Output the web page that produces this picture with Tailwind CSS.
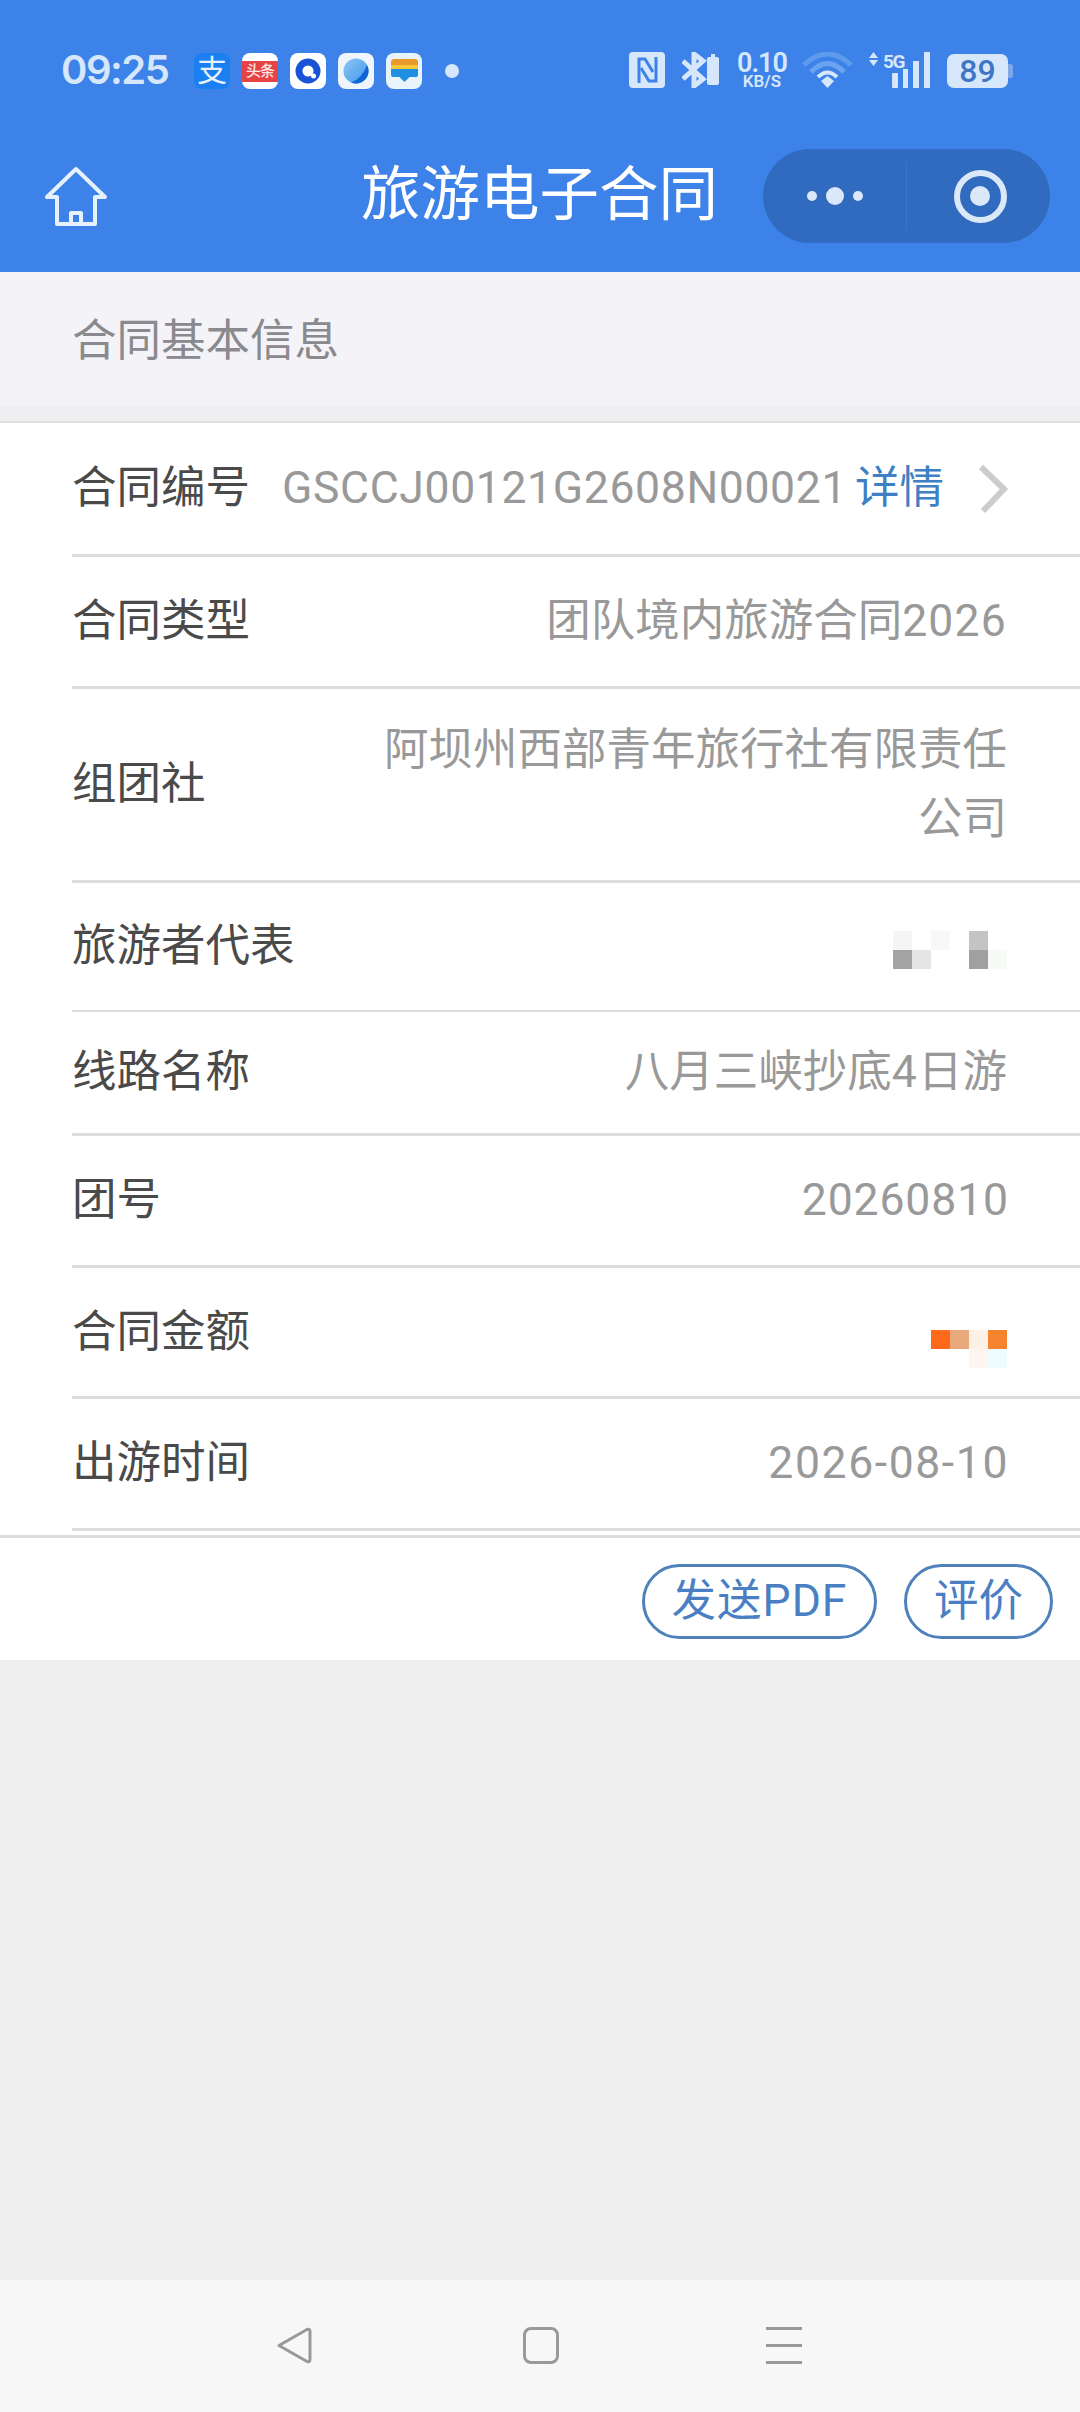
<!DOCTYPE html>
<html lang="zh">
<head>
<meta charset="utf-8">
<title>旅游电子合同</title>
<script src="https://cdn.jsdelivr.net/npm/@tailwindcss/browser@4"></script>
</head>
<body class="m-0 bg-[#eeeeee]">
<div class="w-[1080px] h-[2412px] flex flex-col overflow-hidden font-['Roboto','Noto_Sans_CJK_SC',sans-serif]">

    <!-- 顶部蓝色区域 -->
    <header class="h-[272px] shrink-0 bg-[#3d82e8] flex flex-col">
        <!-- 状态栏 -->
        <div class="h-[149px] shrink-0 flex items-start pt-[52px] pl-[61px]">
            <span class="w-[108px] h-[36px] flex items-center text-[40px] font-semibold leading-none text-[#d6e7fc] font-['Inter',sans-serif] tracking-[-1.5px]">09:25</span>
            <div class="ml-[25px] mt-px flex items-center gap-[12px]">
                <div class="w-[36px] h-[36px] rounded-[8px] bg-[#1a7ff0] flex items-center justify-center text-[30px] leading-none text-[#e6f1fd]">支</div>
                <div class="w-[36px] h-[36px] rounded-[8px] bg-white flex items-center overflow-hidden">
                    <span class="w-full h-[21px] bg-[#e64444] flex items-center justify-center text-[15px] font-medium leading-none text-[#fde8e8] whitespace-nowrap tracking-[-1px]">头条</span>
                </div>
                <div class="w-[36px] h-[36px] rounded-[8px] bg-white flex items-center justify-center">
                    <svg width="30" height="30" viewBox="0 0 30 30"><circle cx="15" cy="15" r="9" fill="none" stroke="#1a53d8" stroke-width="7"/><circle cx="20.500" cy="20" r="2.500" fill="#ffffff"/></svg>
                </div>
                <div class="w-[36px] h-[36px] rounded-[8px] bg-[#eef5fd] flex items-center justify-center">
                    <svg width="30" height="30" viewBox="0 0 30 30">
                        <defs><linearGradient id="planet" x1="0" y1="0" x2="1" y2="1"><stop offset="0" stop-color="#8cc8f6"/><stop offset="1" stop-color="#3f93ea"/></linearGradient></defs>
                        <circle cx="15" cy="15" r="12.500" fill="url(#planet)"/>
                        <path d="M26 9A12.500 12.500 0 0 1 10 26.500Q21 23 26 9Z" fill="#1266d4"/>
                    </svg>
                </div>
                <div class="w-[36px] h-[36px] rounded-[8px] bg-[#e8f3fc] flex flex-col items-center pt-[6px]">
                    <div class="w-[27px] h-[6px] rounded-t-[3px] bg-[#e99a2b]"></div>
                    <div class="w-[27px] h-[4px] bg-[#f5c53a]"></div>
                    <svg width="27" height="13" viewBox="0 0 27 13" class="block"><path d="M0 0H27V6Q27 8 24 8H18.500L13.500 13L8.500 8H3Q0 8 0 6Z" fill="#1f8fe0"/></svg>
                </div>
            </div>
            <div class="ml-[23px] mt-[12px] w-[14px] h-[14px] rounded-full bg-[#d6e7fc]"></div>

            <!-- 右侧状态图标 -->
            <svg class="ml-[170px]" width="36" height="36" viewBox="0 0 36 36">
                <rect width="36" height="36" rx="4" fill="#d6e7fc"/>
                <path d="M10 31V7H16L24 20" fill="none" stroke="#3d82e8" stroke-width="3"/>
                <path d="M27 5V29H20L12 16" fill="none" stroke="#3d82e8" stroke-width="3"/>
            </svg>
            <svg class="ml-[17px]" width="37" height="36" viewBox="0 0 37 36">
                <path d="M1 9L21 27L12 34V2L21 9L1 27" fill="none" stroke="#d6e7fc" stroke-width="5"/>
                <path d="M25 7Q25 5 27 5H29V2H33V5H35Q37 5 37 7V31Q37 33 35 33H27Q25 33 25 31Z" fill="#d6e7fc"/>
            </svg>
            <div class="ml-[17px] w-[52px] flex flex-col items-center text-[#d6e7fc] font-semibold">
                <span class="h-[22px] flex items-center text-[27px] leading-none tracking-[-1px]">0.10</span>
                <span class="h-[14px] flex items-center text-[17px] leading-none">KB/S</span>
            </div>
            <svg class="ml-[14px]" width="51" height="36" viewBox="0 0 51 36">
                <path d="M2 13Q25.500 -9 49 13" fill="none" stroke="#5e9bec" stroke-width="5"/>
                <path d="M9 20Q25.500 3 42 20" fill="none" stroke="#6aa4ef" stroke-width="5"/>
                <path d="M16 25Q25.500 16 35 25" fill="none" stroke="#d6e7fc" stroke-width="4"/>
                <path d="M19 29L25.500 24L32 29L25.500 36Z" fill="#d6e7fc"/>
            </svg>
            <div class="ml-[15px] relative w-[62px] h-[36px]">
                <svg class="absolute left-0 top-0" width="62" height="36" viewBox="0 0 62 36">
                    <path d="M1 6L5.500 0L10 6ZM1 8L5.500 14L10 8Z" fill="#d6e7fc"/>
                    <rect x="24" y="21" width="6" height="15" rx="1" fill="#d6e7fc"/>
                    <rect x="35" y="17" width="5" height="19" fill="#d6e7fc"/>
                    <rect x="45" y="9" width="6" height="27" fill="#d6e7fc"/>
                    <rect x="56" y="0" width="6" height="36" fill="#d6e7fc"/>
                </svg>
                <span class="absolute left-[15px] top-[0px] text-[19px] leading-none font-bold text-[#d6e7fc] tracking-[-1.5px]">5G</span>
            </div>
            <div class="ml-[17px] mt-[2px] flex items-center">
                <div class="w-[61px] h-[34px] rounded-[7px] bg-[#d6e7fc] flex items-center justify-center text-[32px] font-medium leading-none text-[#3e76c4]">89</div>
                <div class="w-[5px] h-[14px] rounded-r-[3px] bg-[#7ea8e8]"></div>
            </div>
        </div>

        <!-- 标题栏 -->
        <div class="flex items-start">
            <svg class="ml-[45px] mt-[17px]" width="62" height="62" viewBox="0 0 62 62">
                <path d="M31 3L2 31H12V58H50V31H60Z M26 58V47H36V58" fill="none" stroke="#e6f1fd" stroke-width="4" stroke-linejoin="round"/>
            </svg>
            <h1 class="ml-[254px] w-[357px] h-[94px] flex items-center text-[59.500px] font-normal leading-none whitespace-nowrap text-white">旅游电子合同</h1>
            <!-- 胶囊按钮 -->
            <div class="ml-[45px] w-[287px] h-[94px] rounded-full bg-[#306bbf] flex items-center">
                <div class="w-[143px] flex items-center justify-center gap-[9px]">
                    <span class="w-[10px] h-[10px] rounded-full bg-[#dbe8f8]"></span>
                    <span class="w-[18px] h-[18px] rounded-full bg-[#dbe8f8]"></span>
                    <span class="w-[10px] h-[10px] rounded-full bg-[#dbe8f8]"></span>
                </div>
                <div class="w-px h-[66px] bg-[#3c76c6]"></div>
                <div class="flex-1 flex justify-center pl-[3px]">
                    <div class="w-[53px] h-[53px] rounded-full border-[6px] border-[#dbe8f8] flex items-center justify-center">
                        <span class="w-[20px] h-[20px] rounded-full bg-[#dbe8f8]"></span>
                    </div>
                </div>
            </div>
        </div>
    </header>

    <!-- 小节标题 -->
    <div class="h-[151px] shrink-0 flex flex-col bg-[#f4f4f8] border-b-2 border-[#dedede] box-border">
        <div class="h-[133px] pl-[72px] pt-[44px] text-[44.5px] leading-[50px] text-[#8a8a8e]">合同基本信息</div>
        <div class="flex-1 bg-gradient-to-b from-[#f0f0f3] to-[#eeeeef]"></div>
    </div>

    <!-- 合同信息 -->
    <main class="bg-white h-[1112px] shrink-0 pl-[72px] text-[44.5px] leading-[69px] text-[#4a4a4a]">
        <div class="h-[134px] pr-[71px] flex items-center border-b-[3px] border-[#dddddd]">
            <span>合同编号</span>
            <span class="ml-[32px] text-[#999999] tracking-[0.65px]">GSCCJ00121G2608N00021</span>
            <span class="ml-auto text-[#3f7fc4]">详情</span>
            <svg class="ml-[33px]" width="32" height="50" viewBox="0 0 32 50"><path d="M4 3L27 25L6 47" fill="none" stroke="#cccccc" stroke-width="6"/></svg>
        </div>
        <div class="h-[132px] pr-[73px] flex items-center justify-between border-b-[3px] border-[#dddddd]">
            <span>合同类型</span><span class="text-[#999999]">团队境内旅游合同<span class="tracking-[1.2px]">2026</span></span>
        </div>
        <div class="h-[194px] pr-[73px] flex items-center justify-between border-b-[3px] border-[#dddddd]">
            <span>组团社</span><span class="w-[630px] text-right text-[#999999]">阿坝州西部青年旅行社有限责任公司</span>
        </div>
        <div class="h-[129px] pr-[73px] flex items-center justify-between border-b-2 border-[#dddddd]">
            <span>旅游者代表</span>
            <div class="mt-[6px] grid grid-cols-[repeat(6,19px)] grid-rows-[19px_19px]">
                <span class="bg-[#f5f5f5]"></span><span></span><span class="bg-[#f8f8f8]"></span><span></span><span class="bg-[#c4c4c4]"></span><span></span>
                <span class="bg-[#a3a3a3]"></span><span class="bg-[#e5e5e5]"></span><span></span><span></span><span class="bg-[#a0a0a0]"></span><span class="bg-[#f8faf8]"></span>
            </div>
        </div>
        <div class="h-[124px] pr-[73px] flex items-center justify-between border-b-[3px] border-[#dddddd]">
            <span>线路名称</span><span class="text-[#999999]">八月三峡抄底<span class="tracking-[1.2px]">4</span>日游</span>
        </div>
        <div class="h-[132px] pr-[73px] flex items-center justify-between border-b-[3px] border-[#dddddd]">
            <span>团号</span><span class="-mr-[2px] text-[#999999] tracking-[0.9px]">20260810</span>
        </div>
        <div class="h-[131px] pr-[73px] flex items-center justify-between border-b-[3px] border-[#dddddd]">
            <span>合同金额</span>
            <div class="mt-[34px] grid grid-cols-[repeat(4,19px)] grid-rows-[19px_19px]">
                <span class="bg-[#ff6a1a]"></span><span class="bg-[#e8a97c]"></span><span class="bg-[#fdf1e6]"></span><span class="bg-[#f6832e]"></span>
                <span></span><span></span><span class="bg-[#fdf6f0]"></span><span class="bg-[#eefcff]"></span>
            </div>
        </div>
        <div class="h-[132px] pr-[73px] flex items-center justify-between border-b-[3px] border-[#dddddd]">
            <span>出游时间</span><span class="-mr-[2px] text-[#999999] tracking-[1.6px]">2026-08-10</span>
        </div>
    </main>

    <!-- 操作按钮 -->
    <div class="h-[125px] shrink-0 bg-white border-t-[3px] border-[#dddddd] pt-[26px] pr-[27px] flex items-start justify-end gap-[27px] box-border text-[44.5px] leading-none text-[#4a7fc4]">
        <button class="w-[235px] h-[75px] rounded-full border-[3px] border-[#4f82ba] flex items-center justify-center tracking-[1px]">发送PDF</button>
        <button class="w-[149px] h-[75px] rounded-full border-[3px] border-[#4f82ba] flex items-center justify-center">评价</button>
    </div>

    <div class="flex-1"></div>

    <!-- 底部导航 -->
    <nav class="h-[132px] shrink-0 bg-[#f7f7f7] flex items-start pt-[47px] pl-[276px]">
        <svg width="36" height="37" viewBox="0 0 36 37"><path d="M3 18.500L31 2.500Q34 1.500 34 4.500V32.500Q34 35.500 31 34.500Z" fill="none" stroke="#999999" stroke-width="3" stroke-linejoin="round"/></svg>
        <div class="ml-[211px] w-[36px] h-[37px] rounded-[8px] border-[3px] border-[#999999]"></div>
        <div class="ml-[207px] w-[36px] h-[37px] flex flex-col justify-between">
            <span class="h-[3px] bg-[#999999]"></span>
            <span class="h-[3px] bg-[#999999]"></span>
            <span class="h-[3px] bg-[#999999]"></span>
        </div>
    </nav>
</div>
</body>
</html>
